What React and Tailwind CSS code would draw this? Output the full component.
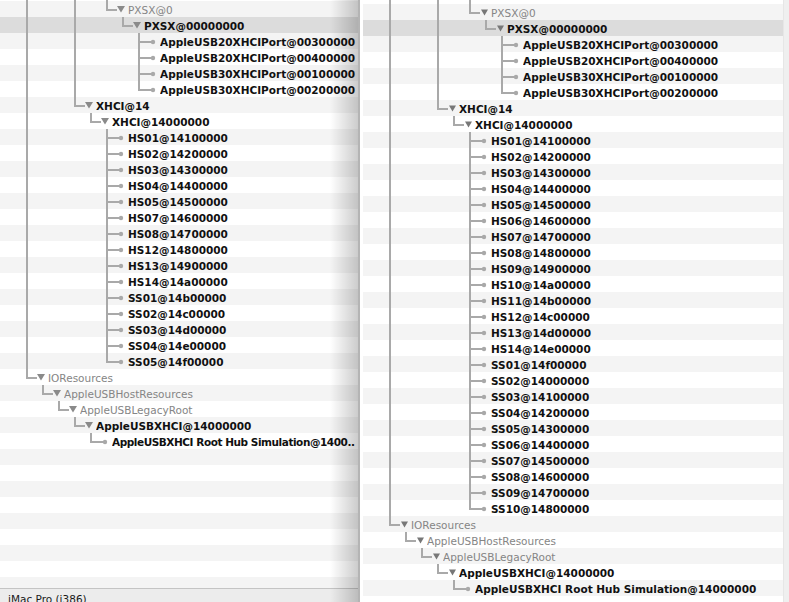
import React from 'react';

const ports = [
  'AppleUSB20XHCIPort@00300000',
  'AppleUSB20XHCIPort@00400000',
  'AppleUSB30XHCIPort@00100000',
  'AppleUSB30XHCIPort@00200000',
];

const leftHub = [
  'HS01@14100000', 'HS02@14200000', 'HS03@14300000', 'HS04@14400000', 'HS05@14500000',
  'HS07@14600000', 'HS08@14700000', 'HS12@14800000', 'HS13@14900000', 'HS14@14a00000',
  'SS01@14b00000', 'SS02@14c00000', 'SS03@14d00000', 'SS04@14e00000', 'SS05@14f00000',
];

const rightHub = [
  'HS01@14100000', 'HS02@14200000', 'HS03@14300000', 'HS04@14400000', 'HS05@14500000',
  'HS06@14600000', 'HS07@14700000', 'HS08@14800000', 'HS09@14900000', 'HS10@14a00000',
  'HS11@14b00000', 'HS12@14c00000', 'HS13@14d00000', 'HS14@14e00000', 'SS01@14f00000',
  'SS02@14000000', 'SS03@14100000', 'SS04@14200000', 'SS05@14300000', 'SS06@14400000',
  'SS07@14500000', 'SS08@14600000', 'SS09@14700000', 'SS10@14800000',
];

const leaf = (name) => ({ name, bold: true });

// the hidden nodes sit above the visible part of the outline
function makeTree(hub, rootHubName) {
  return [
    { hidden: true, children: [
      { hidden: true, children: [
        { hidden: true, children: [
          { hidden: true, children: [
            { hidden: true, children: [
              { name: 'PXSX@0', children: [
                { name: 'PXSX@00000000', bold: true, selected: true, children: ports.map(leaf) },
              ] },
            ] },
          ] },
          { name: 'XHCI@14', bold: true, children: [
            { name: 'XHCI@14000000', bold: true, children: hub.map(leaf) },
          ] },
        ] },
      ] },
    ] },
    { name: 'IOResources', children: [
      { name: 'AppleUSBHostResources', children: [
        { name: 'AppleUSBLegacyRoot', children: [
          { name: 'AppleUSBXHCI@14000000', bold: true, children: [
            { ...leaf(rootHubName), tight: rootHubName.endsWith('..') },
          ] },
        ] },
      ] },
    ] },
  ];
}

function flatten(nodes, level, cont, out) {
  nodes.forEach((n, i) => {
    const last = i === nodes.length - 1;
    if (!n.hidden) out.push({ ...n, level, cont, last, folder: !!n.children });
    if (n.children) flatten(n.children, level + 1, [...cont, !last], out);
  });
  return out;
}

const LINE = '#a9a9a9';

function Guides({ row, small }) {
  const L = row.level;
  const w = L ? 16 * L + 16 : 140;
  return (
    <svg width={w} height={16} className="shrink-0 block">
      {row.cont.map((c, i) =>
        c ? <rect key={i} x={16 * (i + 2) - 6} y={0} width={2} height={16} fill={LINE} /> : null
      )}
      {L ? (
        <>
          <rect x={16 * L - 6} y={0} width={2} height={row.last ? 10 : 16} fill={LINE} />
          <rect x={16 * L - 6} y={8} width={row.folder ? 11 : 15} height={2} fill={LINE} />
          {row.folder ? (
            small ? (
              <polygon points={`${16 * L + 6},5.5 ${16 * L + 13},5.5 ${16 * L + 9.5},11.5`} fill="#777777" />
            ) : (
              <polygon points={`${16 * L + 5},5 ${16 * L + 13},5 ${16 * L + 9},11.5`} fill="#8a8a8a" />
            )
          ) : (
            <circle cx={16 * L + 9} cy={9} r={2.2} fill={LINE} />
          )}
        </>
      ) : null}
    </svg>
  );
}

function Row({ row, k, small }) {
  const bg = row.selected ? 'bg-[#dcdcdc]' : k % 2 === 0 ? 'bg-[#f4f4f4]' : 'bg-white';
  return (
    <div className={`h-4 flex items-start overflow-hidden ${bg}`}>
      {row.cont && <Guides row={row} small={small} />}
      {row.name && (
        <span
          className={`block h-4 min-w-0 flex-1 whitespace-nowrap overflow-hidden leading-[18px] ${
            row.bold ? 'font-bold text-[#111111]' : 'text-[#858585]'
          } ${row.tight ? 'tracking-[-0.45px]' : ''}`}
        >
          {row.name}
        </span>
      )}
    </div>
  );
}

function Outline({ hub, rootHubName, total, small }) {
  const rows = flatten(makeTree(hub, rootHubName), 2, [], []);
  const filler = { cont: [true, false, false, true, false, true], level: 0 };
  const blanks = Array.from({ length: total - rows.length }, () => ({}));
  return (
    <div>
      <Row row={filler} k={-1} small={small} />
      {[...rows, ...blanks].map((r, k) => (
        <Row key={k} row={r} k={k} small={small} />
      ))}
    </div>
  );
}

export default function App() {
  return (
    <div className="w-[789px] h-[602px] flex overflow-hidden bg-white font-['DejaVu_Sans',sans-serif] text-[10.5px]">
      {/* back window */}
      <div className="relative w-[358px] h-[602px] shrink-0 flex flex-col overflow-hidden">
        <div className="h-[588px] shrink-0 overflow-hidden">
          <div className="-mt-[15px]">
            <Outline hub={leftHub} rootHubName="AppleUSBXHCI Root Hub Simulation@1400.." total={38} />
          </div>
        </div>
        <div className="shrink-0 h-[40px] border-t border-[#c4c4c4] bg-[#ececec] pl-[8px] pt-[2px] leading-4 text-[#1a1a1a]">
          iMac Pro (i386)
        </div>
        <div className="absolute right-0 top-0 bottom-0 w-[28px] bg-linear-to-r from-transparent to-black/20 pointer-events-none" />
      </div>
      <div className="w-[2px] shrink-0 bg-[#b4b4b4]" />

      {/* front window */}
      <div className="flex-1 flex h-[602px] overflow-hidden">
        <div className="flex-1 min-w-0 overflow-hidden pl-[3px]">
          <div className="-mt-[12px]">
            <Outline hub={rightHub} rootHubName="AppleUSBXHCI Root Hub Simulation@14000000" total={39} small />
          </div>
        </div>
        <div className="w-[6px] shrink-0 bg-[#efefef] border-l border-[#e6e6e6]" />
      </div>
    </div>
  );
}
